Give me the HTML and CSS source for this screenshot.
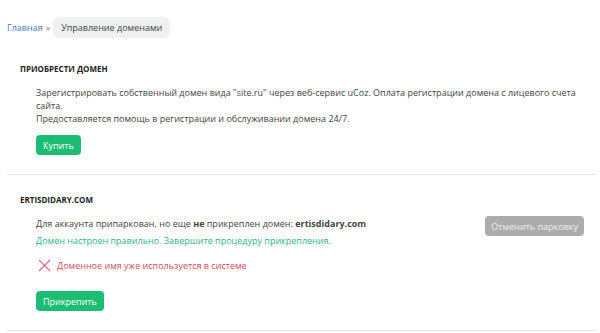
FILE: index.html
```html
<!DOCTYPE html>
<html>
<head>
<meta charset="utf-8">
<link rel="stylesheet" href="styles.css">
</head>
<body>
<nav class="crumbs">
  <a class="crumb-link" href="#">Главная</a>
  <span class="crumb-sep">»</span>
  <span class="crumb-current">Управление доменами</span>
</nav>

<section class="block">
  <h2 class="block-title">ПРИОБРЕСТИ ДОМЕН</h2>
  <div class="block-body">
    <p class="text">Зарегистрировать собственный домен вида "site.ru" через веб-сервис uCoz. Оплата регистрации домена с лицевого счета сайта.<br>Предоставляется помощь в регистрации и обслуживании домена 24/7.</p>
    <button class="btn btn-green">Купить</button>
  </div>
</section>

<section class="block">
  <h2 class="block-title">ERTISDIDARY.COM</h2>
  <div class="block-body">
    <div class="row">
      <div class="row-text">
        <div class="text">Для аккаунта припаркован, но еще <b>не</b> прикреплен домен: <b>ertisdidary.com</b></div>
        <div class="text ok">Домен настроен правильно. Завершите процедуру прикрепления.</div>
      </div>
      <button class="btn btn-gray">Отменить парковку</button>
    </div>
    <div class="error">
      <svg class="error-icon" width="13" height="13" viewBox="0 0 13 13"><path d="M1 1L12 12M12 1L1 12" stroke="#dc6f8f" stroke-width="1.3" fill="none"/></svg>
      <span>Доменное имя уже используется в системе</span>
    </div>
    <button class="btn btn-green">Прикрепить</button>
  </div>
</section>
</body>
</html>
```
FILE: styles.css
```css
* { box-sizing: border-box; }
body {
  margin: 0;
  padding: 0 4px 0 7px;
  background: #fff;
  font-family: "Open Sans", "Noto Sans", sans-serif;
  font-size: 9px;
  color: #444;
}
.crumbs {
  display: flex;
  align-items: center;
  gap: 3px;
  padding-top: 17px;
  height: 38px;
}
.crumb-link { color: #4a7ab5; text-decoration: none; }
.crumb-sep { color: #888; }
.crumb-current {
  background: #eef0f2;
  border-radius: 6px;
  padding: 0 8px;
  height: 21px;
  line-height: 21px;
  color: #444;
}
.block {
  border-bottom: 1px solid #e6e6e6;
  padding: 24px 0 19px;
}
.block + .block { padding-top: 18px; }
.block-title {
  margin: 0 0 0 13px;
  font-size: 8px;
  line-height: 13px;
  font-weight: 700;
  color: #222;
}
.block-body { padding: 11px 0 0 29px; }
.text { margin: 0; line-height: 13px; }
p.text { margin-bottom: 10px; }
.ok { color: #2fb38a; margin-top: 4px; }
.row { display: flex; justify-content: space-between; align-items: flex-start; }
.btn {
  border: 0;
  border-radius: 4px;
  font-family: inherit;
  font-size: 9px;
  height: 20px;
  padding: 0 7px;
  color: #fff;
}
.btn-green { background: #1cbd73; }
.btn-gray { background: #acacac; color: #eee; margin-top: -1px; margin-right: 12px; padding: 0 6px; }
.error {
  display: flex;
  align-items: center;
  gap: 6px;
  color: #d24a5c;
  margin: 12px 0 19px 2px;
}
```
